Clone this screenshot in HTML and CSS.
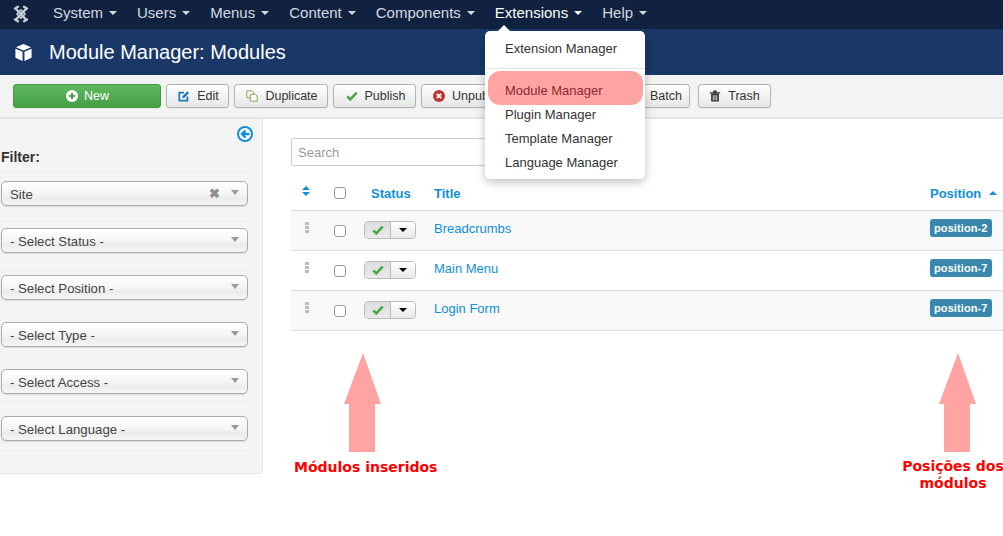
FILE: index.html
```html
<!DOCTYPE html>
<html lang="en">
<head>
<meta charset="utf-8">
<title>Module Manager: Modules</title>
<link rel="stylesheet" href="styles.css">
</head>
<body>
<nav class="nav">
  <svg class="logo" viewBox="0 0 18 18"><g fill="none" stroke="#c9ced8" stroke-width="2.4" stroke-linecap="round"><path d="M4 4 L13.5 14"/><path d="M14 4 L4.500 14"/><path d="M3 3.500 L6 1.800 M15 3.500 L12 1.800 M3 14.500 L6 16.200 M15 14.500 L12 16.200"/><path d="M5 9 L9 5 L13 9 L9 13 Z" stroke-width="1.600"/></g></svg>
  <a class="nav-item">System<i class="caret"></i></a>
  <a class="nav-item">Users<i class="caret"></i></a>
  <a class="nav-item">Menus<i class="caret"></i></a>
  <a class="nav-item">Content<i class="caret"></i></a>
  <a class="nav-item">Components<i class="caret"></i></a>
  <a class="nav-item nav-open">Extensions<i class="caret"></i></a>
  <a class="nav-item">Help<i class="caret"></i></a>
</nav>
<header class="title-bar">
  <svg class="cube" viewBox="0 0 20 20"><path fill="#fff" d="M10 1 L18 4.500 L10 8 L2 4.500 Z M1.500 6 L9 9.300 V19 L1.500 15.500 Z M18.500 6 V15.500 L11 19 V9.300 Z"/></svg>
  <h1>Module Manager: Modules</h1>
</header>
<div class="toolbar">
  <button class="btn btn-new"><svg class="ico" viewBox="0 0 12 12"><circle cx="6" cy="6" r="6" fill="#fff"/><path d="M6 3 V9 M3 6 H9" stroke="#4ba64b" stroke-width="2"/></svg>New</button>
  <button class="btn btn-edit"><svg class="ico" viewBox="0 0 14 14"><path d="M11 7.500 V12.500 H1.500 V3 H7" fill="none" stroke="#1a7ab8" stroke-width="2"/><path d="M5 9.500 L5.500 7 L11 1.500 L13 3.500 L7.500 9 Z" fill="#1a7ab8"/></svg>Edit</button>
  <button class="btn btn-dup"><svg class="ico" viewBox="0 0 14 14"><path d="M1 1 H7 L9 3 V9 H1 Z" fill="#fff" stroke="#6a9a3a"/><path d="M5 5 H11 L13 7 V13 H5 Z" fill="#fff" stroke="#6a9a3a"/></svg>Duplicate</button>
  <button class="btn btn-pub"><svg class="ico" viewBox="0 0 14 14"><path d="M1.500 7.500 L5 11 L12.500 3" fill="none" stroke="#4ba64b" stroke-width="3"/></svg>Publish</button>
  <button class="btn btn-unpub"><svg class="ico" viewBox="0 0 12 12"><circle cx="6" cy="6" r="6" fill="#bd362f"/><path d="M3.800 3.800 L8.200 8.200 M8.200 3.800 L3.800 8.200" stroke="#fff" stroke-width="1.800"/></svg>Unpublish</button>
  <button class="btn btn-batch">Batch</button>
  <button class="btn btn-trash"><svg class="ico" viewBox="0 0 12 14"><path d="M0 2.500 H12 V4 H0 Z M4 .5 H8 V2.500 H4 Z M1.500 4.500 H10.500 V13.500 H1.500 Z" fill="#333"/><path d="M4 6 V12 M6 6 V12 M8 6 V12" stroke="#f2f2f2"/></svg>Trash</button>
</div>
<main class="content">
  <aside class="sidebar">
    <div class="side-toggle"><svg class="back" viewBox="0 0 16 16"><circle cx="8" cy="8" r="7" fill="#fff" stroke="#0f8fd8" stroke-width="2"/><path d="M12.500 8 H6 M8.500 4.500 L5 8 L8.500 11.500" fill="none" stroke="#0f8fd8" stroke-width="2.400"/></svg></div>
    <div class="filter-label">Filter:</div>
    <div class="filter-row"><div class="select"><span>Site</span><b class="clear">&#10006;</b><i class="arrow"></i></div></div>
    <div class="filter-row"><div class="select"><span>- Select Status -</span><i class="arrow"></i></div></div>
    <div class="filter-row"><div class="select"><span>- Select Position -</span><i class="arrow"></i></div></div>
    <div class="filter-row"><div class="select"><span>- Select Type -</span><i class="arrow"></i></div></div>
    <div class="filter-row"><div class="select"><span>- Select Access -</span><i class="arrow"></i></div></div>
    <div class="filter-row"><div class="select"><span>- Select Language -</span><i class="arrow"></i></div></div>
  </aside>
  <section class="list">
    <div class="search">Search</div>
    <div class="row row-head">
      <div class="c-sort"><svg class="sort" viewBox="0 0 8 10"><path d="M4 0 L8 4 H0 Z M0 6 H8 L4 10 Z" fill="#0f8fd8"/></svg></div>
      <div class="c-check"><span class="check"></span></div>
      <div class="c-status">Status</div>
      <div class="c-title">Title</div>
      <div class="c-pos">Position<i class="caret-up"></i></div>
    </div>
    <div class="row row-odd">
      <div class="c-sort"><i class="grip"></i></div>
      <div class="c-check"><span class="check"></span></div>
      <div class="c-status"><span class="toggle"><span class="t-on"><svg viewBox="0 0 14 14"><path d="M1.500 7.500 L5 11 L12.500 3" fill="none" stroke="#4ba64b" stroke-width="3"/></svg></span><span class="t-drop"><i></i></span></span></div>
      <div class="c-title"><a>Breadcrumbs</a></div>
      <div class="c-pos"><span class="badge">position-2</span></div>
    </div>
    <div class="row">
      <div class="c-sort"><i class="grip"></i></div>
      <div class="c-check"><span class="check"></span></div>
      <div class="c-status"><span class="toggle"><span class="t-on"><svg viewBox="0 0 14 14"><path d="M1.500 7.500 L5 11 L12.500 3" fill="none" stroke="#4ba64b" stroke-width="3"/></svg></span><span class="t-drop"><i></i></span></span></div>
      <div class="c-title"><a>Main Menu</a></div>
      <div class="c-pos"><span class="badge">position-7</span></div>
    </div>
    <div class="row row-odd">
      <div class="c-sort"><i class="grip"></i></div>
      <div class="c-check"><span class="check"></span></div>
      <div class="c-status"><span class="toggle"><span class="t-on"><svg viewBox="0 0 14 14"><path d="M1.500 7.500 L5 11 L12.500 3" fill="none" stroke="#4ba64b" stroke-width="3"/></svg></span><span class="t-drop"><i></i></span></span></div>
      <div class="c-title"><a>Login Form</a></div>
      <div class="c-pos"><span class="badge">position-7</span></div>
    </div>
  </section>
</main>
<div class="menu">
  <i class="menu-tip"></i>
  <a class="menu-item first">Extension Manager</a>
  <hr class="menu-sep">
  <a class="menu-item hot">Module Manager</a>
  <a class="menu-item">Plugin Manager</a>
  <a class="menu-item">Template Manager</a>
  <a class="menu-item">Language Manager</a>
</div>
<svg class="big-arrow arrow-left" viewBox="0 0 38 100"><path d="M19 0 L37 51 H31 V99 H5 V51 H0 Z" fill="#ffa3a3"/></svg>
<svg class="big-arrow arrow-right" viewBox="0 0 38 100"><path d="M19 0 L37 51 H31 V99 H5 V51 H0 Z" fill="#ffa3a3"/></svg>
<div class="note note-left">Módulos inseridos</div>
<div class="note note-right">Posições dos<br>módulos</div>
</body>
</html>
```
FILE: styles.css
```css
* { box-sizing: border-box; }
html, body { margin: 0; padding: 0; height: 536px; overflow: hidden; background: #fff; }
body { font-family: "Liberation Sans", Arial, sans-serif; font-size: 12px; color: #333; position: relative; }
i { display: block; }

.nav { height: 29px; background: #10223f; display: flex; align-items: center; padding: 0 0 5px 12px; }
.logo { width: 18px; height: 18px; margin-right: 23px; margin-bottom: -3px; flex: none; }
.nav-item { color: #d5d9e0; font-size: 15px; margin-right: 20px; display: flex; align-items: center; }
.nav-open { color: #fff; }
.caret { width: 0; height: 0; border: 4px solid transparent; border-top-color: currentColor; border-bottom: 0; margin-left: 6px; margin-top: 2px; }

.title-bar { height: 46px; background: #1a3867; display: flex; align-items: center; padding-left: 14px; }
.cube { width: 19px; height: 19px; margin-right: 16px; flex: none; }
h1 { margin: 0; font-size: 20px; font-weight: 400; color: #fff; }

.toolbar { height: 44px; background: #f3f3f3; border-bottom: 2px solid #e4e4e4; display: flex; align-items: flex-start; padding: 9px 0 0 13px; }
.btn { height: 24px; font: 12.5px "Liberation Sans", Arial, sans-serif; color: #333; background: linear-gradient(#fff, #e6e6e6); border: 1px solid #b3b3b3; border-radius: 3px; box-shadow: 0 1px 2px rgba(0,0,0,.05); margin-right: 5px; display: flex; align-items: center; justify-content: center; padding: 0; flex: none; }
.ico { width: 12px; height: 12px; margin-right: 7px; flex: none; }
.btn-new { width: 148px; color: #fff; background: linear-gradient(#5fb85f, #44a044); border-color: #3f9a3f; padding-left: 1px; }
.btn-new .ico { margin-right: 6px; }
.btn-edit { width: 63px; padding-left: 2px; }
.btn-dup { width: 94px; padding-left: 2px; }
.btn-pub { width: 83px; padding-left: 2px; }
.btn-unpub { width: 93px; justify-content: flex-start; padding-left: 11px; }
.btn-batch { width: 171px; justify-content: flex-end; padding-right: 7px; margin-right: 8px; }
.btn-trash { width: 73px; }

.content { display: flex; align-items: flex-start; }
.sidebar { width: 263px; height: 355px; background: #f4f4f4; border-right: 1px solid #e6e6e6; border-bottom: 1px solid #e6e6e6; border-bottom-right-radius: 4px; padding: 7px 14px 0 1px; flex: none; }
.side-toggle { display: flex; justify-content: flex-end; height: 17px; margin-right: -5px; }
.back { width: 16px; height: 16px; }
.filter-label { font-size: 14px; font-weight: 700; height: 25px; margin-top: 4px; padding-top: 1px; border-bottom: 1px solid #ececec; line-height: 18px; }
.filter-row { height: 47px; padding-top: 9px; border-bottom: 1px solid #fbfbfb; }
.select { height: 25px; background: linear-gradient(#fff 0, #f5f5f5 50%, #ececec 70%, #f6f6f6 100%); border: 1px solid #aaa; border-radius: 5px; box-shadow: 0 1px 1px rgba(0,0,0,.1); display: flex; align-items: center; padding: 2px 8px 0 8px; font-size: 13.2px; color: #444; }
.select span { flex: 1; }
.clear { font-size: 13px; color: #8f8f8f; margin-right: 11px; margin-top: -2px; }
.arrow { width: 0; height: 0; border: 4px solid transparent; border-top: 5px solid #999; border-bottom: 0; margin-top: -5px; }

.list { margin-left: 28px; flex: 1; min-width: 0; margin-right: -1px; padding-top: 19px; }
.search { width: 240px; height: 28px; border: 1px solid #ccc; border-radius: 3px; color: #999; font-size: 13px; padding: 6px 6px; line-height: 15px; }
.row { height: 40px; border-bottom: 1px solid #ddd; display: flex; font-size: 13px; padding-top: 10px; }
.row-head { height: 45px; padding-top: 20px; font-weight: 700; color: #0f8fd8; border-bottom: 1px solid #ddd; }
.row-odd { background: #f9f9f9; }
.c-sort { width: 31px; padding-left: 14px; padding-top: 1px; flex: none; }
.c-check { width: 42px; padding-left: 12px; flex: none; }
.c-status { width: 70px; flex: none; display: flex; justify-content: flex-start; }
.row-head .c-status { padding-left: 7px; }
.c-title { flex: 1; color: #0f8fd8; }
.c-title a { color: #0f8fd8; }
.c-pos { width: 74px; flex: none; display: flex; align-items: flex-start; margin-top: -2px; }
.sort { width: 8px; height: 10px; display: block; }
.grip { width: 4px; height: 11px; background: repeating-linear-gradient(#bdbdb5 0 3px, transparent 3px 4px); }
.check { display: block; width: 12px; height: 12px; background: #fff; border: 1px solid #999; border-radius: 3px; margin-top: 4px; }
.row-head .check { margin-top: 1px; }
.row-head .c-sort { padding-top: 0; padding-left: 11px; }
.toggle { display: flex; width: 52px; height: 18px; border: 1px solid #bbb; border-radius: 4px; overflow: hidden; }
.t-on { width: 26px; background: linear-gradient(#ddd, #eaeaea); border-right: 1px solid #bbb; display: flex; align-items: center; justify-content: center; }
.t-on svg { width: 12px; height: 12px; }
.t-drop { flex: 1; background: linear-gradient(#fff, #e8e8e8); display: flex; align-items: center; justify-content: center; }
.t-drop i { width: 0; height: 0; border: 4px solid transparent; border-top-color: #000; border-bottom: 0; }
.badge { background: #3a87ad; color: #fff; font-size: 11px; font-weight: 700; border-radius: 3px; padding: 0 4px; height: 18px; line-height: 18px; letter-spacing: .1px; }
.caret-up { display: inline-block; width: 0; height: 0; border: 4px solid transparent; border-bottom-color: #0f8fd8; border-top: 0; margin-left: 8px; vertical-align: 3px; }
.row-head .c-pos { display: block; margin-top: 0; }

.menu { position: absolute; left: 485px; top: 31px; width: 160px; height: 148px; background: #fff; border-radius: 5px; box-shadow: 0 3px 10px rgba(0,0,0,.25); padding-top: 8px; }
.menu-tip { position: absolute; left: 13px; top: -6px; width: 0; height: 0; border: 6px solid transparent; border-bottom-color: #fff; border-top: 0; }
.menu-item { display: block; height: 24px; line-height: 20px; padding-left: 20px; font-size: 13px; color: #333; }
.menu-sep { margin: 5px 1px 2px; border: 0; border-top: 1px solid #e5e5e5; height: 0; }
.first { height: 24px; }
.hot { height: 34px; line-height: 40px; margin: 0 2px 0 3px; padding-left: 17px; border-radius: 12px; background: #ffa3a3; color: #8c2a35; }

.big-arrow { position: absolute; width: 38px; height: 100px; top: 353px; }
.arrow-left { left: 344px; }
.arrow-right { left: 939px; }
.note { position: absolute; color: #f00; font-family: "DejaVu Sans", sans-serif; font-weight: 700; font-size: 14px; line-height: 17px; white-space: nowrap; }
.note-left { left: 294px; top: 459px; }
.note-right { left: 902px; top: 458px; width: 102px; text-align: center; }
```
